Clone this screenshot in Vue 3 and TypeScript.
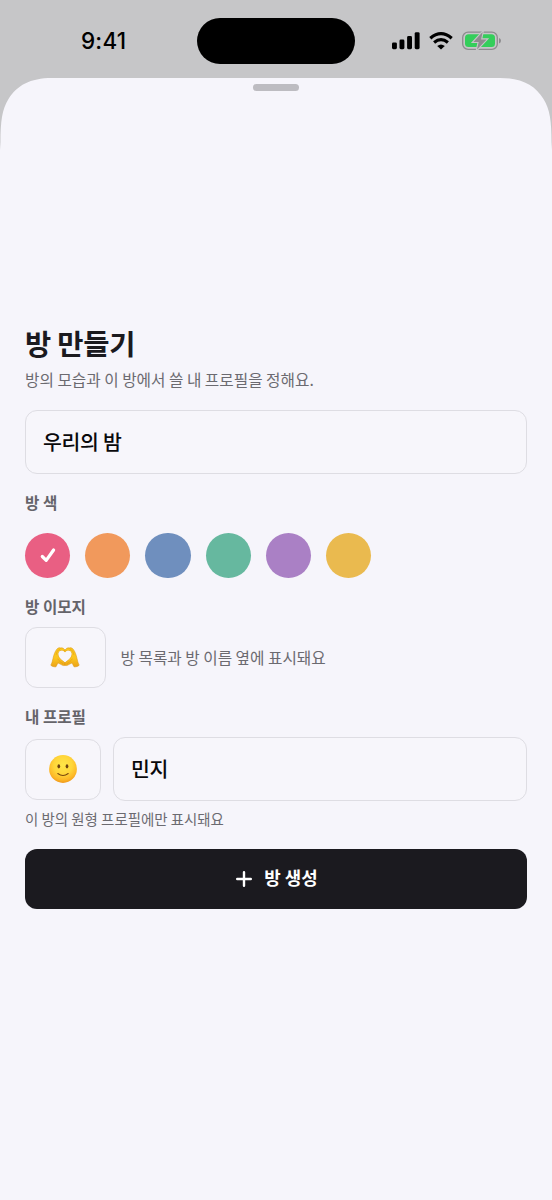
<script setup lang="ts">
import { ref } from 'vue'

interface Swatch {
  name: string
  color: string
}

const swatches: Swatch[] = [
  { name: 'rose', color: '#e95f83' },
  { name: 'orange', color: '#f1995c' },
  { name: 'blue', color: '#6f8fbe' },
  { name: 'green', color: '#66b89f' },
  { name: 'purple', color: '#aa80c5' },
  { name: 'yellow', color: '#eaba4f' },
]

const selected = ref<string>('rose')
const roomName = ref<string>('우리의 밤')
const nickname = ref<string>('민지')
</script>

<template>
  <div class="screen">
    <header class="status">
      <span class="clock">9:41</span>
      <div class="island"></div>
      <div class="indicators">
        <svg class="signal" width="28" height="18" viewBox="0 0 28 18">
          <rect x="0" y="10.4" width="4.9" height="6.8" rx="1.4" />
          <rect x="7.5" y="7.6" width="4.9" height="9.6" rx="1.4" />
          <rect x="15.1" y="4" width="4.9" height="13.2" rx="1.4" />
          <rect x="22.7" y="0.2" width="4.9" height="17" rx="1.4" />
        </svg>
        <svg class="wifi" width="24" height="18" viewBox="0 0 24 18">
          <path d="M1.3 6.3Q12 -3 22.7 6.3" />
          <path d="M5.1 10.5Q12 4.9 18.9 10.5" />
          <path class="dot" d="M12 17.6L8.2 14Q12 10.8 15.8 14Z" />
        </svg>
        <svg class="battery" width="40" height="20" viewBox="0 0 40 20">
          <rect class="case" x="0.7" y="1.1" width="34.6" height="17.2" rx="5.4" />
          <path class="tip" d="M37 6.9Q39 7.5 39 9.7Q39 11.9 37 12.5Z" />
          <rect class="charge" x="3" y="3.3" width="30" height="12.8" rx="3.5" />
          <path class="bolt" d="M20.6 1L11.4 11H16.7L15 18.6L24.6 8.4H19.1Z" />
        </svg>
      </div>
    </header>

    <main class="sheet">
      <div class="grabber"></div>

      <h1>방 만들기</h1>
      <p class="subtitle">방의 모습과 이 방에서 쓸 내 프로필을 정해요.</p>

      <input v-model="roomName" class="field room" type="text" />

      <h2>방 색</h2>
      <div class="swatches">
        <button
          v-for="s in swatches"
          :key="s.name"
          class="swatch"
          :style="{ background: s.color }"
          @click="selected = s.name"
        >
          <svg v-if="selected === s.name" width="18" height="18" viewBox="0 0 18 18">
            <path d="M3.3 10.5L7.2 14.4L14.6 4" />
          </svg>
        </button>
      </div>

      <h2 class="emoji-label">방 이모지</h2>
      <div class="row emoji-row">
        <button class="tile wide">
          <svg class="hands" width="30" height="22" viewBox="0 0 30 22">
            <defs>
              <linearGradient id="skin" x1="0" y1="0" x2="0" y2="1">
                <stop offset="0" stop-color="#fbc91f" />
                <stop offset="0.55" stop-color="#fbc51f" />
                <stop offset="1" stop-color="#eca318" />
              </linearGradient>
            </defs>
            <g id="hand">
              <path fill="url(#skin)" stroke="#d9920f" stroke-width="0.5" stroke-linejoin="round" d="M0.8 18.2C2 16 2.4 14 3 11.4C3.8 7.8 5 4.2 7 2C8.3 .6 9.6 .4 10.8 1C12.4 .4 14 1.4 15 3.2V5.4C13.6 3.4 10.6 2.6 9 4.6C7.6 6.8 8.2 9.6 10.4 12L15 15.6V18.3C13.8 18.9 12.6 18.6 11.2 17.6L8 15.9C7.4 17 6.8 18.2 6 19.8C4 20 2 19.4 0.8 18.2Z" />
              <path fill="none" stroke="#d9920f" stroke-width="0.45" stroke-linecap="round" d="M6.2 7.5C6.5 5 7.8 3 10 1.9M7.8 12C9 14 10.9 15.4 13 16.6" />
            </g>
            <use href="#hand" transform="translate(30 0) scale(-1 1)" />
            <path fill="#f7f6fb" d="M15 15C11.4 12.6 8.5 9.8 8.6 6.8C8.8 3.4 13 2.6 15 5.4C17 2.6 21.2 3.4 21.4 6.8C21.5 9.8 18.6 12.6 15 15Z" />
          </svg>
        </button>
        <span class="hint">방 목록과 방 이름 옆에 표시돼요</span>
      </div>

      <h2 class="profile-label">내 프로필</h2>
      <div class="row profile-row">
        <button class="tile">
          <svg class="face" width="28" height="28" viewBox="0 0 28 28">
            <defs>
              <radialGradient id="face" cx="0.5" cy="0.36" r="0.66">
                <stop offset="0" stop-color="#ffe648" />
                <stop offset="0.5" stop-color="#ffd63a" />
                <stop offset="0.8" stop-color="#fdb827" />
                <stop offset="1" stop-color="#ee9418" />
              </radialGradient>
            </defs>
            <circle cx="14" cy="14" r="13.9" fill="url(#face)" />
            <ellipse cx="9.8" cy="11.3" rx="1.35" ry="2.1" fill="#6d4110" />
            <ellipse cx="18" cy="11.3" rx="1.35" ry="2.1" fill="#6d4110" />
            <path d="M8.8 18.5Q14 22.5 19.2 18.5" fill="none" stroke="#79480d" stroke-width="1.1" stroke-linecap="round" />
          </svg>
        </button>
        <input v-model="nickname" class="field nick" type="text" />
      </div>
      <p class="note">이 방의 원형 프로필에만 표시돼요</p>

      <button class="submit">
        <svg width="16" height="16" viewBox="0 0 16 16">
          <path d="M8 1.2V14.8M1.2 8H14.8" />
        </svg>
        <span>방 생성</span>
      </button>
    </main>
  </div>
</template>

<style>
body {
  margin: 0;
  background: #f6f5fb;
}
</style>

<style scoped>
* {
  box-sizing: border-box;
}

.screen {
  width: 552px;
  height: 1200px;
  overflow: hidden;
  background: linear-gradient(#c6c6c8 150px, #f6f5fb 150px);
  font-family: 'Noto Sans CJK KR', sans-serif;
  color: #1b1a1f;
}

button {
  padding: 0;
  border: 0;
  background: none;
  font: inherit;
  color: inherit;
}

svg {
  display: block;
  flex: none;
}

.status {
  display: flex;
  height: 78px;
}

.clock {
  width: 197px;
  padding-left: 81px;
  font: 500 22.5px/82px Inter, sans-serif;
  letter-spacing: 0.2px;
  color: #000;
}

.island {
  width: 158px;
  height: 46px;
  margin-top: 17.5px;
  border-radius: 23px;
  background: #000;
}

.indicators {
  display: flex;
  margin-left: 36.5px;
  padding-top: 31px;
}

.signal {
  margin-top: 1px;
}

.wifi {
  margin: 0.5px 0 0 9px;
  overflow: visible;
  fill: none;
  stroke: #000;
  stroke-width: 3.2;
}

.wifi .dot {
  fill: #000;
  stroke: none;
}

.battery {
  margin: -0.5px 0 0 9px;
}

.case {
  fill: none;
  stroke: #8c8b8e;
  stroke-width: 1.3;
}

.tip {
  fill: #8c8b8e;
}

.charge {
  fill: #34ce5b;
}

.bolt {
  fill: #8f8c90;
  stroke: #c6c6c8;
  stroke-width: 2.2;
  paint-order: stroke;
}

.sheet {
  display: flex;
  flex-direction: column;
  height: 1122px;
  padding: 6px 25px 0;
  background: #f6f5fb;
  clip-path: path('M0.5 64C0.5 44 2 31 8.5 21C17 7.5 30 0 52 0H500C522 0 535 7.5 543.5 21C550 31 551.5 44 551.5 64L552 72V1122H0V72Z');
}

.grabber {
  align-self: center;
  width: 46px;
  height: 6.5px;
  border-radius: 4px;
  background: #bdbcc1;
}

h1 {
  margin: 232.5px 0 0;
  font-size: 28.5px;
  font-weight: 700;
  line-height: 40px;
  letter-spacing: -0.2px;
}

.subtitle {
  margin: 7px 0 0;
  font-size: 15.7px;
  line-height: 20px;
  color: #6b6a70;
}

.field {
  display: block;
  min-width: 0;
  height: 64px;
  padding: 0 17px 2px;
  border: 1px solid #dedde3;
  border-radius: 12px;
  outline: none;
  background: #f7f6fb;
  font: 500 20.5px 'Noto Sans CJK KR', sans-serif;
  letter-spacing: -0.3px;
  color: #09090b;
}

.room {
  width: 502px;
  margin-top: 19.5px;
}

h2 {
  margin: 18px 0 0;
  font-size: 15.6px;
  font-weight: 700;
  line-height: 20px;
  color: #65646a;
}

.emoji-label {
  margin-top: 18.5px;
}

.swatches {
  display: flex;
  gap: 15px;
  margin-top: 21px;
}

.swatch {
  display: grid;
  place-items: center;
  width: 45.2px;
  height: 45.2px;
  border-radius: 50%;
}

.swatch svg {
  fill: none;
  stroke: #fff;
  stroke-width: 3.2;
  stroke-linecap: round;
  stroke-linejoin: round;
}

.row {
  display: flex;
  align-items: center;
}

.emoji-row {
  gap: 14.5px;
  margin-top: 11px;
}

.tile {
  display: grid;
  place-items: center;
  width: 76px;
  height: 61px;
  border: 1px solid #dedde3;
  border-radius: 12px;
  background: #f7f6fb;
}

.tile.wide {
  width: 81px;
}

.hands {
  margin: 1px 1px 0 0;
}

.face {
  margin-right: 1px;
}

.hint {
  font-size: 15.7px;
  line-height: 20px;
  color: #6b6a70;
}

.profile-row {
  gap: 12px;
  margin-top: 11px;
}

.nick {
  flex: 1;
}

.note {
  margin: 7.5px 0 0;
  font-size: 14.45px;
  line-height: 20px;
  color: #6b6a70;
}

.submit {
  display: flex;
  align-items: center;
  justify-content: center;
  gap: 12px;
  height: 60px;
  margin-top: 20px;
  padding-left: 2px;
  border-radius: 12px;
  background: #1b1a1f;
  color: #fff;
  font-size: 17.9px;
  font-weight: 700;
}

.submit span {
  padding-bottom: 3px;
}

.submit svg {
  fill: none;
  stroke: #fff;
  stroke-width: 2.4;
  stroke-linecap: round;
}
</style>
